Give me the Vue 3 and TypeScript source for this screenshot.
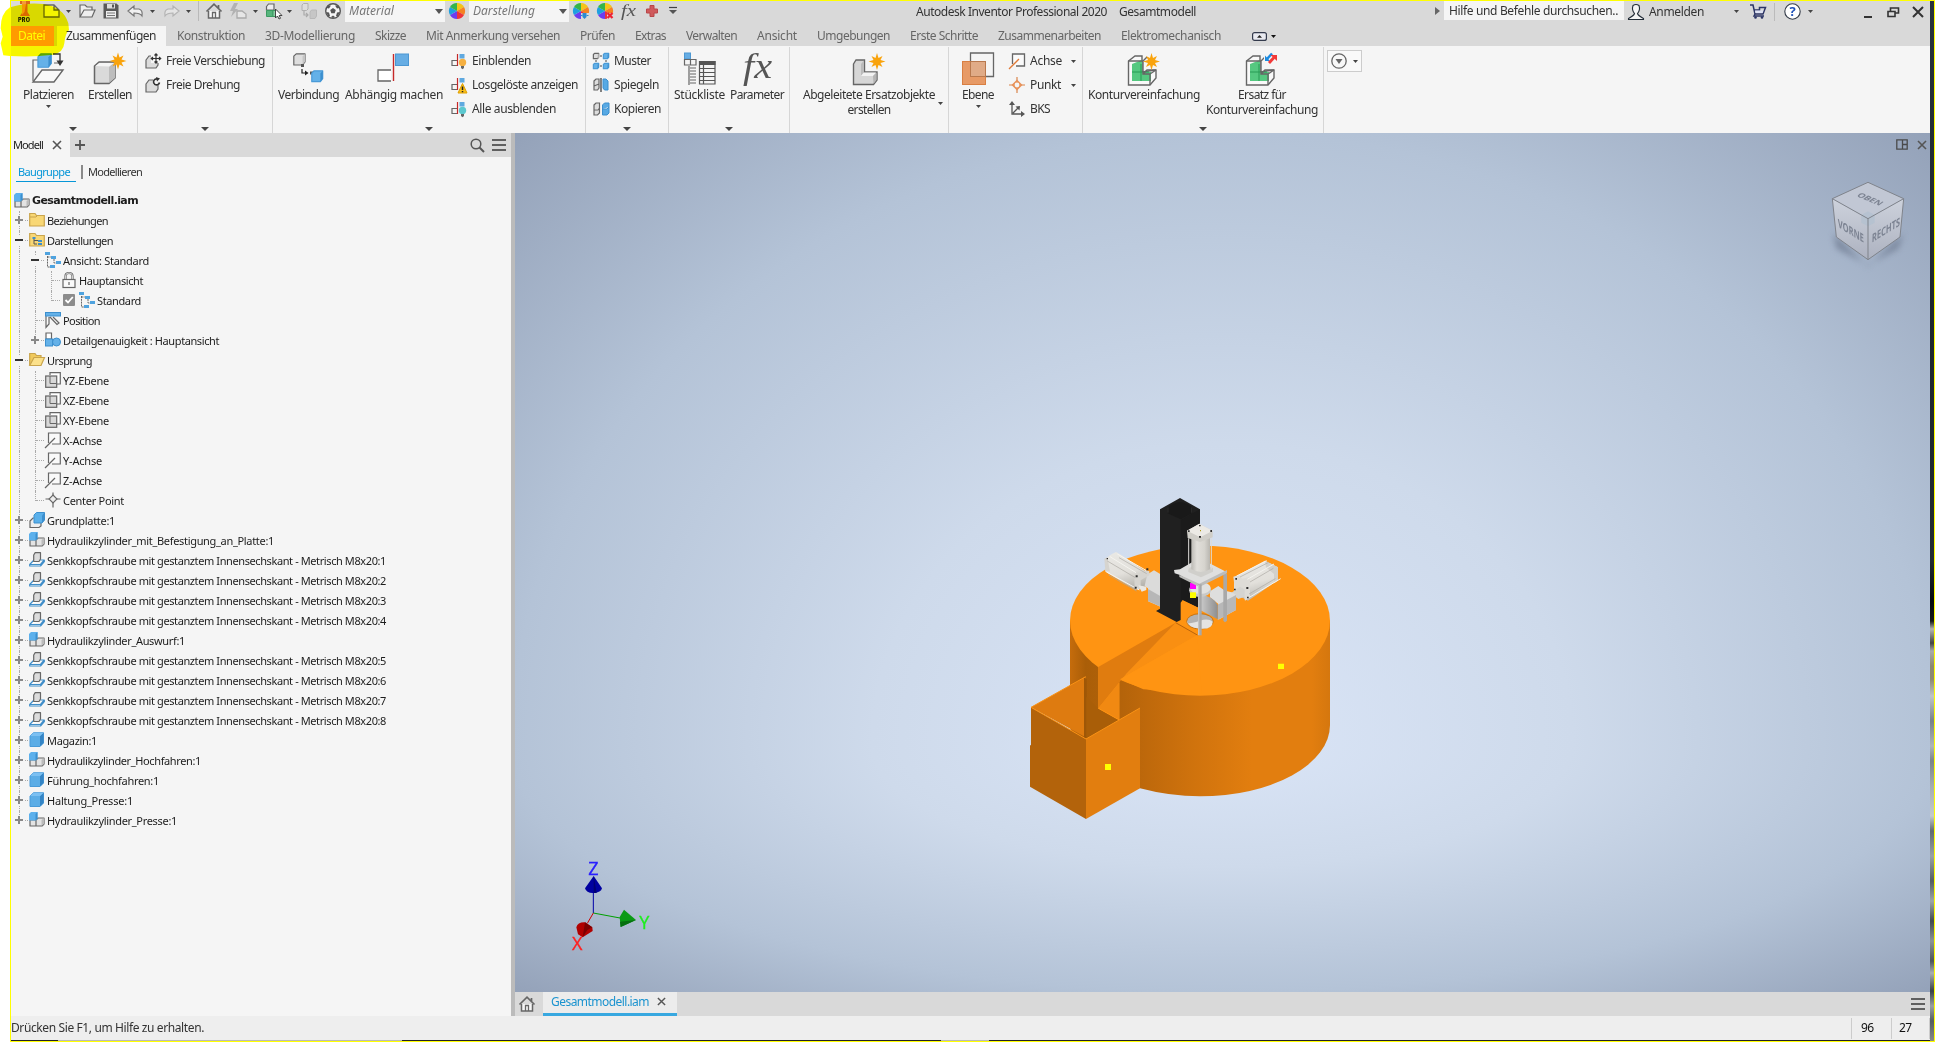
<script setup lang="ts">
import type { Directive } from 'vue'

interface Icon { w: number; h: number; body: string }
interface Small { icon: string; text: string; w: number; arrow?: boolean }
interface Big { icon: string; lines: [string, number][]; gap: number; w: number; drop?: boolean; side?: boolean }
interface Group { w: number; bigs: Big[]; smalls?: Small[]; smallGap?: number; more?: number }
interface Node { t: string; w: number; icon: string; toggle?: '+' | '-'; lv: number; check?: boolean; last?: boolean }

// Spreads the letters so that a label takes exactly its nominal width.
const vFit: Directive<HTMLElement, number> = {
  mounted(el, binding) {
    const n = (el.textContent ?? '').length
    const natural = el.getBoundingClientRect().width
    el.style.letterSpacing = `${(binding.value - natural) / n}px`
  },
}

const G = '#666'
const star = (x: number, y: number, s = 1) =>
  `<path transform="translate(${x} ${y}) scale(${s})" fill="#f9a30c" d="M0-8.500L1.500-3.500 5.500-5.500 3.500-1.500 8.500 0 3.500 1.500 5.500 5.500 1.500 3.500 0 8.500-1.500 3.500-5.500 5.500-3.500 1.500-8.500 0-3.500-1.500-5.500-5.500-1.500-3.500z"/>`
const wheel = `<g transform="translate(8 8)"><path fill="#f5c518" d="M0 0L0-8A8 8 0 0 1 7-4z"/><path fill="#f58220" d="M0 0L7-4A8 8 0 0 1 7 4z"/><path fill="#ee3338" d="M0 0L7 4A8 8 0 0 1 0 8z"/><path fill="#6c3df0" d="M0 0L0 8A8 8 0 0 1-7 4z"/><path fill="#1ea0e0" d="M0 0L-7 4A8 8 0 0 1-7-4z"/><path fill="#35b44a" d="M0 0L-7-4A8 8 0 0 1 0-8z"/></g>`
const cube = (x: number, y: number, s: number, f: string, d: string, st: string) =>
  `<g transform="translate(${x} ${y}) scale(${s})"><path d="M1 4L4 1H15V11L12 15H1z" fill="${f}" stroke="${st}" stroke-width="${1.2 / s}" stroke-linejoin="round"/><path d="M12 4.500L15 1V11L12 15z" fill="${d}"/></g>`
const blue = (x: number, y: number, s: number) => cube(x, y, s, '#64b1e8', '#3c8fce', '#4a9bd8')
const grey = (x: number, y: number, s: number) => cube(x, y, s, '#dedede', '#c4c4c4', G)
const constraint = `<path d="M6 7.500H1V12.500H6" fill="none" stroke="${G}" stroke-width="1.200"/><path d="M6.500 1V13" stroke="#c62828" stroke-width="1.200"/><rect x="8.500" y="1" width="5" height="4.500" fill="#5fa9e0"/>`
const bulb = (c: string) => constraint + `<circle cx="11.500" cy="9.500" r="3.700" fill="${c}"/><path d="M10 13h3v2l-1.500 1.300L10 15z" fill="#666"/>`
const views = `<path d="M2.500 4V15H5M2.500 5H7M9 7V11H12" fill="none" stroke="${G}" stroke-width="1" stroke-dasharray="2 .8"/><path d="M0 0h5v3H0zM6 4h5v3H6zM5 13h5v3H5zM11 9h5v3h-5z" fill="#4fa3df"/>`
const lshape = `<path d="M1.500 9L8 4H15V20L29 18V26L23 33H1.500z" fill="#f9f9f9" stroke="${G}" stroke-width="1.400"/><path d="M5 12L15 8V20H24V29H5z" fill="#55c880"/><path d="M5 20H22M14 12V29" stroke="#299a55"/><path d="M1.500 9H16V22H23V33M16 9L20 5M16 22L20 18H29M23 22L29 18" fill="none" stroke="${G}" stroke-width="1.400"/>`

const icons: Record<string, Icon> = {
  logo: { w: 16, h: 22, body: `<path fill="#d9691e" d="M3 1H13V4H10.500V12L13 16H3L5.500 12V4H3z"/><path fill="#f39a3c" d="M5 1H9V4L7.500 12 5 15z"/><text x="1" y="21.500" font-size="5.500" font-weight="900" font-family="Inter,sans-serif" fill="#222" textLength="12">PRO</text>` },
  new: { w: 17, h: 16, body: `<path d="M1 2H11L16 7V14H1zM11 2V7H16" fill="#f4f4f4" stroke="${G}" stroke-width="1.300"/>` },
  open: { w: 17, h: 16, body: `<path d="M1 14V2H6L8 4H13V7M1 14L5 7H16L13 14z" fill="#eee" stroke="${G}" stroke-width="1.200"/>` },
  save: { w: 16, h: 16, body: `<path d="M.500.500H13.500L15.500 2.500V15.500H.500z" fill="#5a5a5a"/><rect x="4" y="1" width="8" height="4.500" fill="#ddd"/><rect x="9" y="1.500" width="2" height="3" fill="#555"/><rect x="3" y="8" width="10" height="6.500" fill="#eee"/><path d="M4 10H12M4 12.500H12" stroke="#777"/>` },
  undo: { w: 17, h: 16, body: `<path d="M1 8L7 3V6H12Q16 7 15 13Q13 10 7 10V13z" fill="#f0f0f0" stroke="#777" stroke-width="1.200"/>` },
  redo: { w: 17, h: 16, body: `<path d="M16 8L10 3V6H5Q1 7 2 13Q4 10 10 10V13z" fill="#e4e4e4" stroke="#b4b4b4" stroke-width="1.200"/>` },
  sep: { w: 1, h: 20, body: `<rect width="1" height="20" fill="#b9b9b9"/>` },
  home: { w: 16, h: 16, body: `<path d="M2.500 8V15H13.500V8" fill="#f6f6f6" stroke="${G}" stroke-width="1.500"/><path d="M.500 8.500L8 1.200 15.500 8.500M12.500 2V5" fill="none" stroke="${G}" stroke-width="1.700"/><path d="M6.500 15V9.500H9.500V15" fill="none" stroke="${G}" stroke-width="1.300"/>` },
  bolt: { w: 18, h: 16, body: `<path d="M5 0H9L6 6H9L2 14 4 8H1z" fill="#b2b2b2"/><path d="M8 8H13L17 11V15H8z" fill="#e6e6e6" stroke="#aaa" stroke-width="1.300"/>` },
  pick: { w: 17, h: 16, body: `<path d="M1.500 3.500L3.500 1H9V7H1.500z" fill="#eee" stroke="${G}" stroke-width="1.200"/><path d="M1.500 7.500H8V13.500H1.500z" fill="#57b57c" stroke="#3c9a62"/><path d="M8 7.500H12V13.500H8z" fill="#8fd0a8" stroke="#3c9a62"/><path d="M10.500 6V15L12.500 13 14 16 15.500 15.300 14.200 12.500H17z" fill="#fff" stroke="#333" stroke-width=".900"/>` },
  conn: { w: 16, h: 16, body: `<path d="M1 2L2.500.500H7V6L5.500 7.500H1z" fill="#ddd" stroke="#b0b0b0"/><path d="M9 9L10.500 7H15.500V13L14 15.500H9z" fill="#c6c6c6" stroke="#b8b8b8"/><path d="M3 8V12H7M5 10L7 12 5 14" fill="none" stroke="#aaa" stroke-width="1.200"/>` },
  ball: { w: 16, h: 16, body: `<circle cx="8" cy="8" r="7.300" fill="#f5f5f5" stroke="#555" stroke-width="1.400"/><path d="M8 5L10.800 7 9.700 10.300H6.300L5.200 7zM3 2.500H6L4 5.500 1.500 5zM13 2.500H10L12 5.500 14.500 5zM1 9L4 9.500 5 13 3 13zM15 9L12 9.500 11 13 13 13zM6 14L8 12.500 10 14 8 15z" fill="#555"/>` },
  wheel: { w: 16, h: 16, body: wheel },
  wheelAdd: { w: 16, h: 16, body: wheel + `<path d="M8 10h8v6H8z" fill="#d9d9d9"/><path d="M9.500 10h4v4l-2 2-2-2z" fill="#2b8ad2"/><path d="M7.500 12.500H16" stroke="#2b8ad2" stroke-dasharray="2 1"/>` },
  wheelDel: { w: 16, h: 16, body: wheel + `<path d="M10 10h6v6h-6z" fill="#d9d9d9"/><path d="M10.500 10l5 5M15.500 10l-5 5" stroke="#ee2233" stroke-width="2.300"/>` },
  fx: { w: 17, h: 16, body: `<text x="0" y="12.500" font-size="17" font-style="italic" font-family="'Liberation Serif',serif" fill="#555" textLength="15" lengthAdjust="spacingAndGlyphs">fx</text>` },
  plus: { w: 12, h: 12, body: `<path d="M4 .500H8V4H11.500V8H8V11.500H4V8H.500V4H4z" fill="#cf5a5c" stroke="#b94648"/>` },
  cust: { w: 8, h: 8, body: `<path d="M0 .500H8" stroke="#444" stroke-width="1.200"/><path d="M0 3H8L4 7z" fill="#555"/>` },
  arrow: { w: 5, h: 3, body: `<path d="M0 0H5L2.500 3z" fill="#444"/>` },
  tri: { w: 5, h: 8, body: `<path d="M0 0V8L5 4z" fill="#666"/>` },
  user: { w: 16, h: 16, body: `<path d="M5 1.500Q8-.500 11 1.500Q12.500 6 9.500 9.500Q10 11.500 15.500 14.500V15.500H.500V14.500Q6 11.500 6.500 9.500Q3.500 6 5 1.500z" fill="#f5f5f5" stroke="#222b36" stroke-width="1.100"/>` },
  cart: { w: 16, h: 15, body: `<path d="M0 1H3L5 10H13L15.500 3.500H9.500V6H4M5 10L4 12H14" fill="none" stroke="#2c3566" stroke-width="1.500"/><path d="M5 6.500H13.500L12.500 9H5.500z" fill="#dfe3f5"/><circle cx="5.500" cy="13.500" r="1.300" fill="#2c3566"/><circle cx="12" cy="13.500" r="1.300" fill="#2c3566"/>` },
  help: { w: 17, h: 17, body: `<circle cx="8.500" cy="8.500" r="7.700" fill="#fff" stroke="#333b48" stroke-width="1.100"/><text x="8.500" y="13" text-anchor="middle" font-size="13" font-weight="700" font-family="'Open Sans',sans-serif" fill="#1d50b8">?</text>` },
  min: { w: 8, h: 12, body: `<path d="M0 11H8" stroke="#333" stroke-width="2"/>` },
  restore: { w: 12, h: 11, body: `<path d="M3.500 4V1H11.500V6H8.500M1 4.500H8V9.500H1z" fill="none" stroke="#333" stroke-width="1.600"/>` },
  close: { w: 12, h: 12, body: `<path d="M1 1L11 11M11 1L1 11" stroke="#333" stroke-width="2"/>` },
  place: { w: 34, h: 34, body: `<path d="M7 8H1V29M22 11H28" fill="none" stroke="${G}" stroke-width="1.200"/><path d="M10 18H31L22 30H1z" fill="#f9f9f9" stroke="${G}" stroke-width="1.400"/>${blue(5, 1, .95)}<path d="M21 2H28V10" fill="none" stroke="#333" stroke-width="1.300"/><path d="M24.500 8.500H31.500L28 14z" fill="#333"/>` },
  create: { w: 34, h: 34, body: `<path d="M1.500 14L6 10H22V26L16 31.500H1.500z" fill="#dadada" stroke="${G}" stroke-width="1.500" stroke-linejoin="round"/><path d="M16 15L22 10V26L16 31z" fill="#bdbdbd"/><path d="M2.500 14L6.500 11H21L16 14.500z" fill="#f5f5f5"/>${star(25, 9)}` },
  fmove: { w: 16, h: 16, body: `<path d="M1 7L4 3H13V12L11 15H1z" fill="#dcdcdc" stroke="${G}" stroke-width="1.200"/><path d="M6 0H16V10H6z" fill="#f5f5f5"/><path d="M11 1V10M6.500 5.500H15.500M9.500 2.500L11 .800 12.500 2.500M9.500 8.500L11 10.200 12.500 8.500M8 4L6.300 5.500 8 7M14 4L15.700 5.500 14 7" fill="none" stroke="#333" stroke-width="1.200"/>` },
  frot: { w: 16, h: 16, body: `<path d="M1 7L4 3H13V12L11 15H1z" fill="#dcdcdc" stroke="${G}" stroke-width="1.200"/><path d="M8 0H16V8H8z" fill="#f5f5f5"/><path d="M14.500 5.500A3 3 0 1 1 12.500 2" fill="none" stroke="#333" stroke-width="1.600"/><path d="M11 0L15 1.500 12 4.500z" fill="#333"/>` },
  joint: { w: 34, h: 34, body: `${grey(1, 1, .8)}<rect x="9" y="12" width="3" height="3" fill="#555"/><path d="M10 17V21H15" fill="none" stroke="#222" stroke-width="1.200"/><path d="M13 18.500L16.500 21 13 23.500z" fill="#222"/><rect x="18" y="19.500" width="3" height="3" fill="#555"/>${blue(19, 18, .78)}` },
  constrain: { w: 34, h: 34, body: `<path d="M14 18H1V29H14" fill="#fff" stroke="${G}" stroke-width="1.300"/><path d="M16.500 2V29" stroke="#c62828" stroke-width="1.400"/><rect x="18.500" y="2" width="13" height="11.500" fill="#66ade4" stroke="#4c97d2"/>` },
  show: { w: 16, h: 17, body: bulb('#f5b041') },
  sick: { w: 16, h: 17, body: constraint + `<path d="M11.500 6.500L16 16H7z" fill="#f9bf1a" stroke="#e0a000"/><path d="M11.500 9.500V13M11.500 14V15.200" stroke="#222" stroke-width="1.500"/>` },
  hide: { w: 16, h: 17, body: bulb('#5cc8cf') },
  pattern: { w: 16, h: 16, body: `${grey(0, 0, .38)}${blue(10, 0, .38)}${blue(0, 10, .38)}${blue(10, 10, .38)}<path d="M7 3H10M3 7V10M7 13H10M13 7V10" stroke="#444" stroke-dasharray="2 1"/>` },
  mirror: { w: 16, h: 16, body: `<path d="M1 4L3 2H6V11L4.500 13H1zM1 9L6 7" fill="#ddd" stroke="${G}" stroke-width="1.200"/><path d="M8 1V15" stroke="#333" stroke-width="1.200"/><path d="M10 2H13L15 4V13H11.500L10 11z" fill="#57a9e4" stroke="#3c8fce"/>` },
  copy: { w: 17, h: 16, body: `<path d="M1 4L3 2H6.500V12L4.500 14H1zM1 9H5L6.500 7" fill="#ddd" stroke="${G}" stroke-width="1.200"/><path d="M9.500 4L11.500 2H16V12L14 14H9.500zM9.500 8H14L16 6" fill="#57a9e4" stroke="#3c8fce"/>` },
  bom: { w: 34, h: 34, body: `<rect x="1.500" y="1" width="6" height="6" fill="#66ade4" stroke="#4c97d2"/><path d="M1.500 7.500H7.500V13H1.500zM7.500 7.500H13V13H7.500zM6 14V33M7 16H13M7 19H13M7 22H13M7 25H13M7 28H13M7 31H13" fill="none" stroke="${G}" stroke-width="1.200"/><path d="M16.500 9.500H32V32H16.500zM20.500 12V32M16.500 16.500H32M16.500 20.500H32M16.500 24.500H32M16.500 28.500H32" fill="none" stroke="#555" stroke-width="1.200"/><path d="M16 9H32.500V13H16z" fill="#555"/>` },
  param: { w: 34, h: 34, body: `<text x="3" y="26" font-size="36" font-style="italic" font-family="'Liberation Serif',serif" fill="#555" textLength="29" lengthAdjust="spacingAndGlyphs">fx</text>` },
  derive: { w: 34, h: 34, body: `<path d="M1.500 12L4 8H12.500V20H25V28L21.500 32.500H1.500z" fill="#d6d6d6" stroke="${G}" stroke-width="1.400"/><path d="M9 12L12 8.500V20L9 24z" fill="#bbb"/><path d="M9 24L12 20.500H24L21 24z" fill="#f2f2f2"/><path d="M21 24L24.500 20.500V28L21.500 32z" fill="#b4b4b4"/>${star(25, 9.500)}` },
  plane: { w: 34, h: 34, body: `<path d="M9.500 1H32.500V24.500H9.500z" fill="none" stroke="${G}" stroke-width="1.300"/><rect x="1.500" y="9.500" width="23" height="23" fill="#e79a66" stroke="#d97f42"/><rect x="9.500" y="9.500" width="15" height="15" fill="#e0ab87" stroke="#b9794e"/>` },
  axis: { w: 16, h: 16, body: `<path d="M3.500 11V1H15.500V13H7" fill="#fafafa" stroke="${G}" stroke-width="1.300"/><path d="M0 16L10 6" stroke="#e07b39" stroke-width="1.300"/>` },
  point: { w: 16, h: 16, body: `<path d="M8 0V16M0 8H16" stroke="#d9864d" stroke-width="1.200"/><path d="M8 2.500L13.500 8 8 13.500 2.500 8z" fill="#e8925a"/><circle cx="8" cy="8" r="2.400" fill="#f5f5f5"/>` },
  ucs: { w: 16, h: 16, body: `<path d="M3 2V13H14M4 12L9 7" fill="none" stroke="#555" stroke-width="1.300"/><path d="M0 4L3 0 6 4zM12 10L16 13 12 16zM6.500 5.500L11 5 10.500 9.500z" fill="#555"/>` },
  shrink: { w: 34, h: 34, body: lshape + star(24.500, 9.500) },
  substitute: { w: 34, h: 34, body: lshape + `<path d="M19 0h12v10H19z" fill="#f5f5f5"/><path d="M22 7L27 1.500" stroke="#1b8be0" stroke-width="2.500"/><path d="M20 3.500V9H25z" fill="#1b8be0"/><path d="M24 11L29 5.500" stroke="#f23a3a" stroke-width="2.800"/><path d="M25.500 3H32V9z" fill="#f23a3a"/>` },
  asm: { w: 16, h: 16, body: `<path d="M1 8H7V14H1zM7 8L9 6H15V12L13 14H7z" fill="#e3e3e3" stroke="${G}" stroke-width="1.200" stroke-linejoin="round"/><path d="M12.500 8L15 6V12L12.500 14z" fill="#bbb"/><path d="M0 2L2 0H8.500V6.500L7 8.500H0z" fill="#5cb0ec"/><path d="M6.500 2L8.500 0V6.500L6.500 8.500z" fill="#3c8fce"/>` },
  folder: { w: 16, h: 16, body: `<path d="M.700 14V1.500H6L7.500 3.500H15.300V14z" fill="#f8d775" stroke="#c9a44c" stroke-width="1.200"/><path d="M1 5H7L8.500 3.500" fill="none" stroke="#c9a44c"/>` },
  folderRep: { w: 16, h: 16, body: `<path d="M.700 14V1.500H6L7.500 3.500H15.300V14z" fill="#f8d775" stroke="#c9a44c" stroke-width="1.200"/><path d="M5 6V12H8M5 8.500H9" fill="none" stroke="#555"/><path d="M3.500 5h3v2h-3zM9 8h4v2H9zM9 11h4v2H9z" fill="#3d8ecc"/>` },
  folderOpen: { w: 16, h: 16, body: `<path d="M.700 13V1.500H6L7.500 3.500H12V6" fill="#f0c95c" stroke="#c9a44c" stroke-width="1.200"/><path d="M.700 13.500L5 5.500H15.500L12 13.500z" fill="#fbe08a" stroke="#c9a44c" stroke-width="1.200"/>` },
  views: { w: 16, h: 16, body: views },
  lock: { w: 16, h: 16, body: `<path d="M4.500 7V4Q4.500 1 8 1T11.500 4V7" fill="none" stroke="${G}" stroke-width="2.200"/><path d="M4.500 7V4Q4.500 1 8 1T11.500 4V7" fill="none" stroke="#fff" stroke-width=".700"/><rect x="2" y="7.500" width="12" height="8" fill="#fafafa" stroke="${G}" stroke-width="1.200"/><path d="M8 10V13" stroke="${G}" stroke-width="1.200"/>` },
  position: { w: 16, h: 16, body: `<path d="M1 4V15.500L4 12V5M5 5L12 12.500 14 11 8 5" fill="#fafafa" stroke="${G}" stroke-width="1.200"/><rect x=".500" y=".500" width="15" height="3.500" fill="#64b1e8" stroke="#3c8fce"/>` },
  lod: { w: 16, h: 16, body: `<path d="M1 1H6.500V7H1z" fill="#fff" stroke="${G}" stroke-width="1.200"/><rect x=".500" y="7" width="7" height="7" fill="#64b1e8" stroke="#3c8fce"/><circle cx="11.500" cy="10" r="4" fill="#64b1e8" stroke="#3c8fce"/>` },
  wplane: { w: 16, h: 16, body: `<path d="M5 3V.700H15.300V12H12" fill="#fff" stroke="${G}" stroke-width="1.200"/><rect x=".700" y="4" width="11" height="11.300" fill="#d8d8d8" stroke="${G}" stroke-width="1.200"/><path d="M5 4V11.500H11.500" fill="none" stroke="${G}"/>` },
  waxis: { w: 16, h: 16, body: `<path d="M3.500 11V1H15.300V12H7" fill="#fafafa" stroke="${G}" stroke-width="1.200"/><path d="M0 16L10 6" stroke="${G}" stroke-width="1.300"/>` },
  wpoint: { w: 16, h: 16, body: `<path d="M8 .500V15.500M.500 7H15.500" stroke="${G}" stroke-width="1.200"/><path d="M8 3L12 7 8 11 4 7z" fill="#ececec" stroke="${G}" stroke-width="1.100"/>` },
  ground: { w: 16, h: 16, body: `<path d="M1 9L4 6H12V14L10 15.500H1z" fill="#eee" stroke="${G}" stroke-width="1.200"/><g transform="translate(5 0)"><path d="M0 3L2.500.500H10.500V8L8 11H0z" fill="#5ab0ea" stroke="#3c8fce"/><path d="M8 3.500L10.500.500V8L8 11z" fill="#3c8fce"/></g>` },
  screw: { w: 16, h: 16, body: `<path d="M.700 12.500L5 8H15.300L11.500 12.500zM.700 12.500V14H11.500L15.300 9.500V8" fill="#fff" stroke="#3f8dc8" stroke-width="1.200" stroke-linejoin="round"/><path d="M11.500 12.500L15.300 8V9.500L11.500 14z" fill="#3f8dc8"/><path d="M4.700 9V3L6.200.700H11.500V7L10 9.500H4.700z" fill="#dcdcdc" stroke="${G}" stroke-width="1.200" stroke-linejoin="round"/>` },
  part: { w: 16, h: 16, body: `<path d="M1 4L4.500.700H14.500V11L11 14.500H1z" fill="#5cade6" stroke="#4a9bd8" stroke-linejoin="round"/><path d="M11 4L14.500.700V11L11 14.500z" fill="#3484c4"/><path d="M1 4L4.500.700H14.500L11 4z" fill="#7cc0f2"/>` },
  check: { w: 12, h: 12, body: `<rect width="12" height="12" rx="1" fill="#8c8c8c"/><path d="M2.500 6L5 8.500 9.800 3" fill="none" stroke="#fff" stroke-width="1.800"/>` },
  burger: { w: 14, h: 12, body: `<path d="M0 1H14M0 6H14M0 11H14" stroke="#606060" stroke-width="2"/>` },
  search: { w: 15, h: 15, body: `<circle cx="6" cy="6" r="4.800" fill="none" stroke="#555" stroke-width="1.500"/><path d="M9.500 9.500L14 14" stroke="#555" stroke-width="2"/>` },
  add: { w: 10, h: 10, body: `<path d="M5 0V10M0 5H10" stroke="#555" stroke-width="1.800"/>` },
  x: { w: 10, h: 10, body: `<path d="M1 1L9 9M9 1L1 9" stroke="#555" stroke-width="1.600"/>` },
  tile: { w: 12, h: 11, body: `<path d="M.800.800H11.200V10.200H.800zM6.500 1V10M6.500 5.500H11" fill="none" stroke="#4a4a4a" stroke-width="1.300"/>` },
  expand: { w: 15, h: 9, body: `<rect x=".600" y=".600" width="13.800" height="7.800" rx="2" fill="#e9eaf0" stroke="#333a4c" stroke-width="1.200"/><path d="M5 5.800H10L7.500 3z" fill="#222"/>` },
  circ: { w: 16, h: 16, body: `<circle cx="8" cy="8" r="7.200" fill="#f8f8f8" stroke="#666" stroke-width="1.300"/><path d="M4.500 6H11.500L8 11z" fill="#666"/>` },
}

// Quick access entries: icon name and the space in front of it.
const quick: [string, number][] = [
  ['logo', 0], ['new', 10], ['arrow', 6], ['open', 8], ['save', 7], ['undo', 8], ['arrow', 6], ['redo', 8], ['arrow', 6],
  ['sep', 7], ['home', 7], ['bolt', 7], ['arrow', 6], ['pick', 7], ['arrow', 5], ['conn', 9], ['ball', 8],
]
const tools: [string, number][] = [['wheelAdd', 4], ['wheelDel', 8], ['fx', 8], ['plus', 8], ['cust', 11]]

const tabs: [string, number][] = [
  ['Konstruktion', 68], ['3D-Modellierung', 90], ['Skizze', 31], ['Mit Anmerkung versehen', 134], ['Prüfen', 35], ['Extras', 31],
  ['Verwalten', 51], ['Ansicht', 40], ['Umgebungen', 73], ['Erste Schritte', 68], ['Zusammenarbeiten', 103], ['Elektromechanisch', 100],
]

const groups: Group[] = [
  { w: 127, more: 62, bigs: [{ icon: 'place', lines: [['Platzieren', 51]], gap: 12, w: 51, drop: true }, { icon: 'create', lines: [['Erstellen', 44]], gap: 14, w: 44 }] },
  { w: 135, more: 67, bigs: [], smallGap: 7, smalls: [{ icon: 'fmove', text: 'Freie Verschiebung', w: 99 }, { icon: 'frot', text: 'Freie Drehung', w: 74 }] },
  { w: 313, more: 156, bigs: [{ icon: 'joint', lines: [['Verbindung', 61]], gap: 5, w: 61 }, { icon: 'constrain', lines: [['Abhängig machen', 98]], gap: 6, w: 98 }], smallGap: 8,
    smalls: [{ icon: 'show', text: 'Einblenden', w: 59 }, { icon: 'sick', text: 'Losgelöste anzeigen', w: 106 }, { icon: 'hide', text: 'Alle ausblenden', w: 84 }] },
  { w: 83, more: 41, bigs: [], smallGap: 7, smalls: [{ icon: 'pattern', text: 'Muster', w: 37 }, { icon: 'mirror', text: 'Spiegeln', w: 45 }, { icon: 'copy', text: 'Kopieren', w: 47 }] },
  { w: 121, more: 60, bigs: [{ icon: 'bom', lines: [['Stückliste', 51]], gap: 5, w: 51 }, { icon: 'param', lines: [['Parameter', 54]], gap: 5, w: 54 }] },
  { w: 159, bigs: [{ icon: 'derive', lines: [['Abgeleitete Ersatzobjekte', 132], ['erstellen', 43]], gap: 13, w: 132, side: true }] },
  { w: 134, bigs: [{ icon: 'plane', lines: [['Ebene', 32]], gap: 13, w: 32, drop: true }], smallGap: 15,
    smalls: [{ icon: 'axis', text: 'Achse', w: 32, arrow: true }, { icon: 'point', text: 'Punkt', w: 31, arrow: true }, { icon: 'ucs', text: 'BKS', w: 20 }] },
  { w: 241, more: 120, bigs: [{ icon: 'shrink', lines: [['Konturvereinfachung', 112]], gap: 5, w: 112 }, { icon: 'substitute', lines: [['Ersatz für', 48], ['Konturvereinfachung', 112]], gap: 6, w: 112 }] },
]

const screw = (n: number): Node => ({ t: `Senkkopfschraube mit gestanztem Innensechskant - Metrisch M8x20:${n}`, w: 339, icon: 'screw', toggle: '+', lv: 1 })
const tree: Node[] = [
  { t: 'Beziehungen', w: 61, icon: 'folder', toggle: '+', lv: 1 },
  { t: 'Darstellungen', w: 66, icon: 'folderRep', toggle: '-', lv: 1 },
  { t: 'Ansicht: Standard', w: 86, icon: 'views', toggle: '-', lv: 2 },
  { t: 'Hauptansicht', w: 64, icon: 'lock', lv: 3 },
  { t: 'Standard', w: 44, icon: 'views', lv: 3, check: true, last: true },
  { t: 'Position', w: 37, icon: 'position', lv: 2 },
  { t: 'Detailgenauigkeit : Hauptansicht', w: 156, icon: 'lod', toggle: '+', lv: 2, last: true },
  { t: 'Ursprung', w: 45, icon: 'folderOpen', toggle: '-', lv: 1 },
  { t: 'YZ-Ebene', w: 46, icon: 'wplane', lv: 2 },
  { t: 'XZ-Ebene', w: 46, icon: 'wplane', lv: 2 },
  { t: 'XY-Ebene', w: 46, icon: 'wplane', lv: 2 },
  { t: 'X-Achse', w: 39, icon: 'waxis', lv: 2 },
  { t: 'Y-Achse', w: 39, icon: 'waxis', lv: 2 },
  { t: 'Z-Achse', w: 39, icon: 'waxis', lv: 2 },
  { t: 'Center Point', w: 61, icon: 'wpoint', lv: 2, last: true },
  { t: 'Grundplatte:1', w: 68, icon: 'ground', toggle: '+', lv: 1 },
  { t: 'Hydraulikzylinder_mit_Befestigung_an_Platte:1', w: 227, icon: 'asm', toggle: '+', lv: 1 },
  screw(1), screw(2), screw(3), screw(4),
  { t: 'Hydraulikzylinder_Auswurf:1', w: 138, icon: 'asm', toggle: '+', lv: 1 },
  screw(5), screw(6), screw(7), screw(8),
  { t: 'Magazin:1', w: 50, icon: 'part', toggle: '+', lv: 1 },
  { t: 'Hydraulikzylinder_Hochfahren:1', w: 154, icon: 'asm', toggle: '+', lv: 1 },
  { t: 'Führung_hochfahren:1', w: 112, icon: 'part', toggle: '+', lv: 1 },
  { t: 'Haltung_Presse:1', w: 86, icon: 'part', toggle: '+', lv: 1 },
  { t: 'Hydraulikzylinder_Presse:1', w: 130, icon: 'asm', toggle: '+', lv: 1, last: true },
]
const box = (n: string) => `0 0 ${icons[n].w} ${icons[n].h}`
</script>

<template>
  <div class="screen">
    <div class="app">
      <header class="title">
        <div class="quick">
          <svg v-for="(q, i) in quick" :key="i" :width="icons[q[0]].w" :height="icons[q[0]].h" :viewBox="box(q[0])" :style="{ marginLeft: q[1] + 'px' }" v-html="icons[q[0]].body" />
        </div>
        <div class="combo"><i v-fit="45">Material</i><svg width="8" height="5"><path d="M0 0H8L4 5z" fill="#555" /></svg></div>
        <svg class="wheel" width="16" height="16" v-html="icons.wheel.body" />
        <div class="combo"><i v-fit="62">Darstellung</i><svg width="8" height="5"><path d="M0 0H8L4 5z" fill="#555" /></svg></div>
        <div class="quick tools">
          <svg v-for="q in tools" :key="q[0]" :width="icons[q[0]].w" :height="icons[q[0]].h" :style="{ marginLeft: q[1] + 'px' }" v-html="icons[q[0]].body" />
        </div>
        <div class="caption"><span v-fit="191">Autodesk Inventor Professional 2020</span><span v-fit="77">Gesamtmodell</span></div>
        <svg class="tri" width="5" height="8" v-html="icons.tri.body" />
        <div class="find"><span v-fit="169">Hilfe und Befehle durchsuchen..</span></div>
        <div class="account">
          <svg width="16" height="16" v-html="icons.user.body" />
          <span v-fit="55" class="login">Anmelden</span>
          <svg class="a1" width="5" height="3" v-html="icons.arrow.body" />
          <svg class="cart" width="16" height="15" v-html="icons.cart.body" />
          <b class="rule" />
          <svg class="help" width="17" height="17" v-html="icons.help.body" />
          <svg class="a2" width="5" height="3" v-html="icons.arrow.body" />
        </div>
        <div class="window">
          <svg width="8" height="12" v-html="icons.min.body" />
          <svg width="12" height="11" v-html="icons.restore.body" />
          <svg width="12" height="12" v-html="icons.close.body" />
        </div>
      </header>

      <nav class="tabs">
        <div class="file"><span v-fit="27">Datei</span></div>
        <div class="tab on"><span v-fit="90">Zusammenfügen</span></div>
        <div v-for="t in tabs" :key="t[0]" class="tab"><span v-fit="t[1]">{{ t[0] }}</span></div>
        <svg class="exp" width="15" height="9" v-html="icons.expand.body" />
        <svg width="5" height="3"><path d="M0 0H5L2.500 3z" fill="#111" /></svg>
      </nav>

      <section class="ribbon">
        <div v-for="(g, gi) in groups" :key="gi" class="group" :style="{ width: g.w + 'px' }">
          <div v-for="b in g.bigs" :key="b.icon" class="big" :style="{ marginLeft: b.gap + 'px', width: b.w + 'px' }">
            <svg width="34" height="34" viewBox="0 0 34 34" v-html="icons[b.icon].body" />
            <div class="lines"><div v-for="l in b.lines" :key="l[0]"><span v-fit="l[1]">{{ l[0] }}</span></div></div>
            <svg v-if="b.drop" class="drop" width="5" height="3" v-html="icons.arrow.body" />
          </div>
          <svg v-if="g.bigs[0]?.side" class="sidedrop" width="5" height="3" v-html="icons.arrow.body" />
          <div v-if="g.smalls" class="smalls" :style="{ marginLeft: g.smallGap + 'px' }">
            <div v-for="s in g.smalls" :key="s.text" class="small">
              <svg :width="icons[s.icon].w" :height="icons[s.icon].h" v-html="icons[s.icon].body" />
              <span class="st"><span v-fit="s.w">{{ s.text }}</span></span>
              <svg v-if="s.arrow" class="sa" width="5" height="3" v-html="icons.arrow.body" />
            </div>
          </div>
          <svg v-if="g.more" class="more" width="8" height="4" :style="{ left: g.more - 4 + 'px' }"><path d="M0 0H8L4 4z" fill="#444" /></svg>
        </div>
        <div class="extra"><svg width="16" height="16" v-html="icons.circ.body" /><svg width="5" height="3" v-html="icons.arrow.body" /></div>
      </section>

      <main class="work">
        <aside class="panel">
          <div class="phead">
            <div class="ptab"><span v-fit="30">Modell</span><svg width="10" height="10" v-html="icons.x.body" /></div>
            <svg class="padd" width="10" height="10" v-html="icons.add.body" />
            <svg class="psearch" width="15" height="15" v-html="icons.search.body" />
            <svg width="14" height="12" v-html="icons.burger.body" />
          </div>
          <div class="modes"><span class="mode on"><span v-fit="52">Baugruppe</span></span><b /><span v-fit="54">Modellieren</span></div>
          <div class="root"><svg width="16" height="16" v-html="icons.asm.body" /><strong v-fit="106">Gesamtmodell.iam</strong></div>
          <div v-for="(n, i) in tree" :key="i" class="node">
            <div v-for="l in n.lv" :key="l" class="guide" :class="{ end: l === n.lv && n.last, stub: l === n.lv }">
              <em v-if="l === n.lv && n.toggle" :class="n.toggle === '+' ? 'pl' : 'mi'" />
            </div>
            <svg v-if="n.check" class="chk" width="12" height="12" v-html="icons.check.body" />
            <svg class="nic" width="16" height="16" v-html="icons[n.icon].body" />
            <span v-fit="n.w">{{ n.t }}</span>
          </div>
        </aside>

        <section class="stage">
          <div class="view">
            <svg class="tile" width="12" height="11" v-html="icons.tile.body" />
            <svg class="vclose" width="10" height="10" v-html="icons.x.body" />

            <svg class="viewcube" width="84" height="98" viewBox="795 531 252 294">
              <defs>
                <linearGradient id="cf" x1="0" y1="0" x2="0" y2="1"><stop offset="0" stop-color="#cdd2dc" /><stop offset="1" stop-color="#adb2c0" /></linearGradient>
                <filter id="soft" x="-30%" y="-30%" width="160%" height="160%"><feGaussianBlur stdDeviation="10" /></filter>
              </defs>
              <path d="M820 700L924 800 1030 700 1015 745 924 795 830 745z" fill="#6f7c92" filter="url(#soft)" opacity=".8" />
              <path d="M924 547L1031 596 924 656 817 596z" fill="#c1c7d4" />
              <path d="M817 596L924 656V779L829 711z" fill="url(#cf)" />
              <path d="M1031 596L924 656V779L1020 711z" fill="url(#cf)" />
              <path d="M904 645L924 634 944 645V668L924 679 904 668z" fill="#b3c1d0" opacity=".8" />
              <path d="M924 547L1031 596 1020 711 924 779 829 711 817 596zM817 596L924 656 1031 596M924 656V779" fill="none" stroke="#7f838b" stroke-width="3" />
              <g font-family="'Open Sans',sans-serif" font-weight="700" font-size="27" fill="#7c8392">
                <text transform="matrix(.9 .38 -.75 .55 888 588)" textLength="78" lengthAdjust="spacingAndGlyphs">OBEN</text>
                <text transform="matrix(.85 .52 .04 1.300 834 681)" textLength="92" lengthAdjust="spacingAndGlyphs">VORNE</text>
                <text transform="matrix(.85 -.52 -.04 1.300 935 728)" textLength="100" lengthAdjust="spacingAndGlyphs">RECHTS</text>
              </g>
            </svg>

            <svg class="model" width="340" height="350" viewBox="0 0 1020 1050">
              <defs>
                <linearGradient id="body" gradientUnits="userSpaceOnUse" x1="180" y1="0" x2="960" y2="0">
                  <stop offset="0" stop-color="#c56c0c" /><stop offset=".06" stop-color="#aa5e08" /><stop offset=".19" stop-color="#b3630a" /><stop offset=".3" stop-color="#bf690b" />
                  <stop offset=".48" stop-color="#d0730d" /><stop offset=".7" stop-color="#e27e0f" /><stop offset=".93" stop-color="#e27e0f" /><stop offset="1" stop-color="#d5770e" />
                </linearGradient>
                <linearGradient id="tube" x1="0" x2="1" y1="0" y2="0"><stop offset="0" stop-color="#bcbab5" /><stop offset=".3" stop-color="#e1dfda" /><stop offset=".7" stop-color="#d6d4ce" /><stop offset="1" stop-color="#b9b7b1" /></linearGradient>
                <linearGradient id="tubeL" x1=".3" x2=".6" y1="0" y2="1"><stop offset="0" stop-color="#e9e8e4" /><stop offset=".55" stop-color="#e2e0db" /><stop offset="1" stop-color="#b3b1ab" /></linearGradient>
                <linearGradient id="arc" x1="0" x2="1" y1="0" y2="0"><stop offset="0" stop-color="#ccc" /><stop offset="1" stop-color="#8e8e8e" /></linearGradient>
              </defs>
              <path d="M180 422V735A390 225 0 0 0 390 925Q480 949 570 949A390 214 0 0 0 960 735V422z" fill="url(#body)" />
              <ellipse cx="570" cy="422" rx="390" ry="225" fill="#ff9412" />
              <path d="M265 561L497 428 562 465 328 599V720L265 685z" fill="#f98f12" />
              <path d="M265 561L497 428 350 580 265 685z" fill="#e07c0f" />
              <path d="M265 685L328 608V720z" fill="#f18912" />
              <path d="M330 598L562 465 575 640 400 628z" fill="#ff9412" />
              <path d="M497 428L562 465" stroke="#b9630b" stroke-width="3" fill="none" />
              <path d="M265 685L328 720" stroke="#ff9412" stroke-width="3" />
              <path d="M63 682L227 590V772z" fill="#de7b10" />
              <path d="M222 593L230 596V775H222z" fill="#9e5707" />
              <path d="M229 650L265 688 326 722 229 777z" fill="#a95e08" />
              <path d="M63 682L228 777V1017L60 920V796H63z" fill="#b3630b" />
              <path d="M228 777L390 684V925L228 1017z" fill="#e27e0f" />
              <path d="M227 590L63 682 228 777 390 684" fill="none" stroke="#fa9215" stroke-width="3" />
              <path d="M285 852h18v18h-18zM804 551h18v16h-18z" fill="#ff0" />

              <path d="M380 303L432 271 474 296V390L414 364V325z" fill="#dbdbda" />
              <path d="M414 327L452 349V380L414 363z" fill="#b7b7b7" />
              <path d="M450 88L510 54 570 88V385L518 360 512 368V420L500 426 438 393 450 386z" fill="#202020" />
              <path d="M512 120L570 88V385L520 360H512z" fill="#1b1b1b" />
              <path d="M473 82Q510 52 547 82V99L512 118 473 100z" fill="#191919" />
              <path d="M474 82V98M545 82V98" fill="none" stroke="#2c2c2c" stroke-width="3" />

              <g>
                <path d="M286 240Q295 225 318 216L335 226 413 278 403 322 376 329 286 275z" fill="url(#tubeL)" />
                <path d="M283 236L292 232 300 275 286 272zM373 290L385 282 406 270 418 274V286L392 301V328L374 328z" fill="#d6d4cf" />
                <path d="M322 222L408 271M300 230L378 278M290 276L388 330" stroke="#f5f4f0" stroke-width="3" />
                <path d="M327 233L410 281M296 285L380 333M292 243L376 293" stroke="#aaa8a1" stroke-width="2" />
                <path d="M385 316L409 320V330L395 335z" fill="#e8e7e4" />
                <path d="M409 265h6v6h-6zM377 286h6v6h-6zM374 320h6v6h-6zM290 234h4v4h-4z" fill="#2b2b2b" />
              </g>
              <g>
                <path d="M672 292L765 242 804 262V300L714 362 672 340z" fill="url(#tubeL)" />
                <path d="M670 290L685 286 697 296 720 290V352L705 362 700 340 676 338z" fill="#dedcd7" />
                <path d="M765 242L804 262V302L792 310V282L768 262z" fill="#d2d0ca" />
                <path d="M680 288L770 242M712 298L792 252M718 352L812 296" stroke="#f4f3ef" stroke-width="3" />
                <path d="M720 306L790 265M717 342L796 296M690 291L776 247" stroke="#aaa8a1" stroke-width="2" />
                <path d="M662 340L690 320 704 328V350L685 357z" fill="#d5d4d0" />
                <path d="M676 294h5v5h-5zM709 321h6v6h-6zM672 326h5v5h-5zM711 350h5v5h-5z" fill="#2b2b2b" />
              </g>
              <path d="M600 334L625 318 645 332 665 337 678 344V390L625 419V372L600 352z" fill="#dededd" />
              <path d="M623 374L678 345V390L623 420z" fill="#b8b8b8" />
              <path d="M570 345Q612 348 623 376V418L570 390z" fill="url(#arc)" />
              <ellipse cx="570" cy="424" rx="40" ry="23" fill="#b3b2b1" stroke="#cc730c" stroke-width="3" />
              <path d="M532 420Q532 443 570 446T608 425Q595 414 570 422T532 430z" fill="#e4e3e2" />
              <ellipse cx="570" cy="331" rx="33" ry="20" fill="#c9c9c7" /><ellipse cx="571" cy="324" rx="31" ry="18" fill="#e1e1df" />
              <path d="M540 309h18v18h-18z" fill="#f0f" /><path d="M540 337h18v17h-18z" fill="#ff0" />
              <path d="M640 282h11v140l-6 5-5-5z" fill="#a9a9a9" />
              <path d="M492 270L510 268 568 234 651 277 568 320 508 284 494 280z" fill="#dfdfde" />
              <path d="M508 284L568 311 651 270V280L568 321 508 291z" fill="#bcbcba" />
              <path d="M564 313h11v153h-11z" fill="#a8a8a8" /><path d="M564 315h4v150h-4z" fill="#c4c4c4" />
              <path d="M535 265L570 250 609 264V275L573 292 535 276z" fill="#d0cfcb" />
              <path d="M544 172H600V268Q573 284 544 268z" fill="url(#tube)" />
              <path d="M536 175V268M604 175V268" stroke="#dedcd8" stroke-width="3" />
              <path d="M531 152L568 131 608 152V172L570 186 533 174z" fill="#d0cec8" />
              <path d="M531 152L568 131 608 152 571 172z" fill="#eceae5" />
              <path d="M534 151h5v5h-5zM567 135h5v4h-5zM567 168h6v5h-6zM601 150h5v6h-5z" fill="#2b2b2b" /><path d="M570 150h3v4h-3z" fill="#b29a10" />
            </svg>

            <svg class="triad" width="80" height="90" viewBox="210 60 240 270">
              <path d="M280 219V155" stroke="#0000a8" stroke-width="3" /><path d="M280 219L360 234" stroke="#00a000" stroke-width="3" /><path d="M280 219L262 250" stroke="#c00" stroke-width="3" />
              <path d="M281 108L306 145Q303 158 281 159T255 145z" fill="#0000a0" /><path d="M281 108L290 159H281z" fill="#000074" />
              <path d="M408 240L372 209 359 231 362 261z" fill="#0a9a14" /><path d="M408 240L360 245 362 261z" fill="#067010" />
              <path d="M229 262Q233 246 255 247L277 262 278 273 248 292 234 283z" fill="#b00000" /><path d="M255 247L277 262 262 270 248 292z" fill="#7c0000" />
              <g font-family="'Open Sans',sans-serif" font-size="54"><text x="265" y="106" fill="#2a20ff" stroke="#2a20ff">Z</text><text x="418" y="267" fill="#1dee1d" stroke="#1dee1d">Y</text><text x="216" y="329" fill="#ff2020" stroke="#ff2020">X</text></g>
            </svg>
          </div>
          <div class="docs">
            <svg class="dhome" width="16" height="16" v-html="icons.home.body" />
            <div class="doc"><span v-fit="98">Gesamtmodell.iam</span><svg width="9" height="9" viewBox="0 0 10 10" v-html="icons.x.body" /></div>
            <svg class="dmenu" width="14" height="12" v-html="icons.burger.body" />
          </div>
        </section>
      </main>

      <footer class="status">
        <span v-fit="193" class="hint">Drücken Sie F1, um Hilfe zu erhalten.</span>
        <div class="num">96</div><div class="num last">27</div>
      </footer>
      <div class="edge" />
    </div>
    <div class="desk" />
    <svg class="marker" width="72" height="60" viewBox="0 0 216 180"><path d="M30 22Q80 6 130 12 190 20 205 70L207 90Q196 100 193 130 190 158 160 164 100 172 30 168L10 166 2 130 8 110 2 85Q2 40 30 22z" fill="#ff0" /></svg>
  </div>
</template>

<style>
body { margin: 0; background: #fff; overflow: hidden; }
</style>

<style scoped>
.screen { position: relative; box-sizing: border-box; width: 1935px; height: 1042px; padding-left: 10px; display: flex; font: 12px/16px "Noto Sans", "Open Sans", sans-serif; color: #333; background: #fff; white-space: nowrap; overflow: hidden; }
svg { display: block; flex: none; overflow: visible; }
span, i, strong { flex: none; }
.app { width: 1920px; box-sizing: border-box; border-left: 1px solid #ff0; border-top: 1px solid #ff0; border-bottom: 1px solid #ff0; display: flex; flex-direction: column; background: #f5f5f5; }
.desk { width: 5px; box-sizing: border-box; border: solid #ff0; border-width: 1px 1px 1px 0; background: linear-gradient(#28323b, #1e262d 300px, #222a31 560px, #05090f 600px, #17191a 620px, #b5b5b2 628px, #444 642px, #aaa 650px, #8c8871 665px, #8d8872 678px, #bfc4c8 695px, #78818a 720px, #aeb4b9 745px, #7b8389 760px, #a4abb0 785px, #c3c9cd 815px, #626a70 830px, #99a1a6 855px, #565d62 880px, #9da5a8 900px, #434b50 920px, #8c9396 940px, #4d555a 960px, #a9aeb1 972px, #3a4146 990px, #9b9fa2 1005px, #555c60 1020px, #888 1040px); }
.marker { position: absolute; left: 0; top: 0; mix-blend-mode: multiply; }

.title { height: 25px; background: #d9d9d9; display: flex; }
.quick { display: flex; align-items: center; height: 20px; padding-left: 6px; width: 328px; }
.tools { padding-left: 0; width: 347px; }
.combo { width: 100px; height: 21px; background: #f5f5f5; display: flex; align-items: center; justify-content: space-between; box-sizing: border-box; padding: 0 2px 1px 4px; color: #777; }
.wheel { margin: 2px 4px 0; }
.caption { display: flex; gap: 12px; padding-top: 3px; width: 519px; }
.tri { margin: 6px 4px 0 0; }
.find { width: 180px; box-sizing: border-box; height: 19px; padding: 2px 5px; background: #f5f5f5; display: flex; }
.account { display: flex; align-items: center; height: 21px; padding-left: 4px; width: 236px; }
.login { margin: 1px 0 0 5px; }
.a1 { margin-left: 30px; } .cart { margin-left: 11px; } .rule { width: 1px; height: 18px; background: #bbb; margin: 0 9px 0 8px; } .a2 { margin-left: 7px; }
.window { display: flex; align-items: center; height: 22px; }
.window svg { margin-right: 15px; } .window svg:nth-child(2) { margin-right: 13px; }
.window svg:last-child { margin-right: 0; }

.tabs { height: 20px; background: #d9d9d9; display: flex; align-items: center; color: #666; }
.file { width: 43px; height: 20px; box-sizing: border-box; background: #ff9b0a; display: flex; padding-left: 7px; align-items: center; color: #fff; }
.tab { padding: 0 10px; display: flex; align-items: center; height: 20px; }
.tab.on { background: #f5f5f5; color: #333; margin-left: 3px; padding: 0 10px 0 9px; margin-right: 1px; }
.exp { margin: 1px 4px 0 21px; }

.ribbon { height: 87px; flex: none; background: #f5f5f5; display: flex; }
.group { position: relative; box-sizing: border-box; border-right: 1px solid #d6d6d6; display: flex; height: 86px; margin-top: 1px; }
.big { display: flex; flex-direction: column; align-items: center; padding-top: 5px; flex: none; }
.lines { display: flex; flex-direction: column; align-items: center; margin-top: 1px; }
.lines > div { height: 15px; display: flex; align-items: center; }
.drop { margin-top: 3px; }
.sidedrop { margin: 55px 0 0 3px; }
.smalls { padding-top: 2px; }
.small { height: 24px; display: flex; align-items: center; }
.small > svg:first-child { width: 17px; }
.st { margin-left: 4px; width: 36px; display: flex; }
.sa { margin-left: 5px; }
.more { position: absolute; top: 80px; }
.extra { margin: 4px 0 0 3px; width: 35px; height: 22px; box-sizing: border-box; border: 1px solid #ccc; background: #f9f9f9; display: flex; align-items: center; justify-content: space-around; }

.work { height: 883px; display: flex; }
.panel { width: 500px; background: #f5f5f5; font-size: 11px; color: #1c1c1c; border-right: 4px solid #bbb; flex: none; }
.phead { height: 24px; background: #d9d9d9; display: flex; align-items: center; }
.ptab { width: 59px; height: 24px; box-sizing: border-box; background: #f5f5f5; display: flex; align-items: center; gap: 9px; padding-left: 2px; }
.padd { margin-left: 5px; }
.psearch { margin: 0 7px 0 auto; }
.phead > svg:last-child { margin-right: 5px; }
.modes { display: flex; align-items: center; height: 30px; padding: 0 0 2px 5px; color: #333; }
.mode.on { width: 60px; height: 19px; box-sizing: border-box; padding: 2px 2px 0; display: flex; border-bottom: 1px solid #0696d7; color: #0696d7; line-height: 14px; }
.modes b { width: 2px; height: 14px; background: #8a8a8a; margin: 0 5px; }
.root { height: 20px; margin-top: 2px; display: flex; align-items: center; padding-left: 3px; }
.root strong { margin-left: 2px; font-family: "DejaVu Sans", sans-serif; font-size: 11px; }
.node { height: 20px; display: flex; align-items: center; }
.guide { width: 16px; height: 20px; position: relative; flex: none; }
.guide::before { content: ""; position: absolute; left: 8px; top: 0; bottom: 0; border-left: 1px dotted #aaa; }
.guide.end::before { bottom: 10px; }
.guide.stub::after { content: ""; position: absolute; left: 9px; width: 8px; top: 9px; border-top: 1px dotted #aaa; }
.guide em { position: absolute; z-index: 1; left: 3px; top: 4px; width: 10px; height: 10px; }
.pl { background: linear-gradient(#888, #888) center / 8px 2px no-repeat, linear-gradient(#888, #888) center / 2px 8px no-repeat, #f5f5f5; }
.mi { background: linear-gradient(#333, #333) center / 8px 2px no-repeat, #f5f5f5; }
.nic { margin: -2px 2px 0; }
.chk { margin: -2px 2px 0 4px; }

.stage { width: 1415px; display: flex; flex-direction: column; }
.view { position: relative; height: 859px; background: radial-gradient(1000px 863px at 50% 612px, #dae5f7, #cedaeb 35%, #b4c3d7 71%, #94a2b9 100%) 0 0 / 100% 612px no-repeat, radial-gradient(1000px 348px at 50% 0, #dae5f7, #cedaeb 35%, #b4c3d7 71%, #94a2b9 100%) 0 612px / 100% 247px no-repeat; }
.tile { position: absolute; left: 1381px; top: 6px; }
.vclose { position: absolute; left: 1402px; top: 7px; }
.viewcube { position: absolute; left: 1310px; top: 44px; }
.model { position: absolute; left: 495px; top: 347px; }
.triad { position: absolute; left: 55px; top: 727px; }
.docs { height: 24px; background: #d9d9d9; display: flex; align-items: center; }
.dhome { margin: 0 8px 0 4px; }
.doc { width: 134px; height: 24px; box-sizing: border-box; border-bottom: 3px solid #38a8e0; background: #ececec; color: #1b93cf; display: flex; align-items: center; gap: 8px; padding: 0 0 2px 8px; }
.dmenu { margin: 0 5px 0 auto; }

.status { height: 24px; background: #eee; display: flex; align-items: center; }
.hint { margin-right: auto; }
.num { height: 21px; width: 40px; border-left: 1px solid #ccc; display: flex; align-items: center; box-sizing: border-box; padding-left: 9px; color: #111; letter-spacing: -.5px; }
.num.last { width: 39px; padding-left: 7px; border-right: 1px solid #ccc; }
.edge { height: 1px; background: linear-gradient(90deg, #222 47px, #b9b9b9 47px 391px, #222 391px 930px, #b9b9b9 930px 978px, #222 978px); }
</style>
